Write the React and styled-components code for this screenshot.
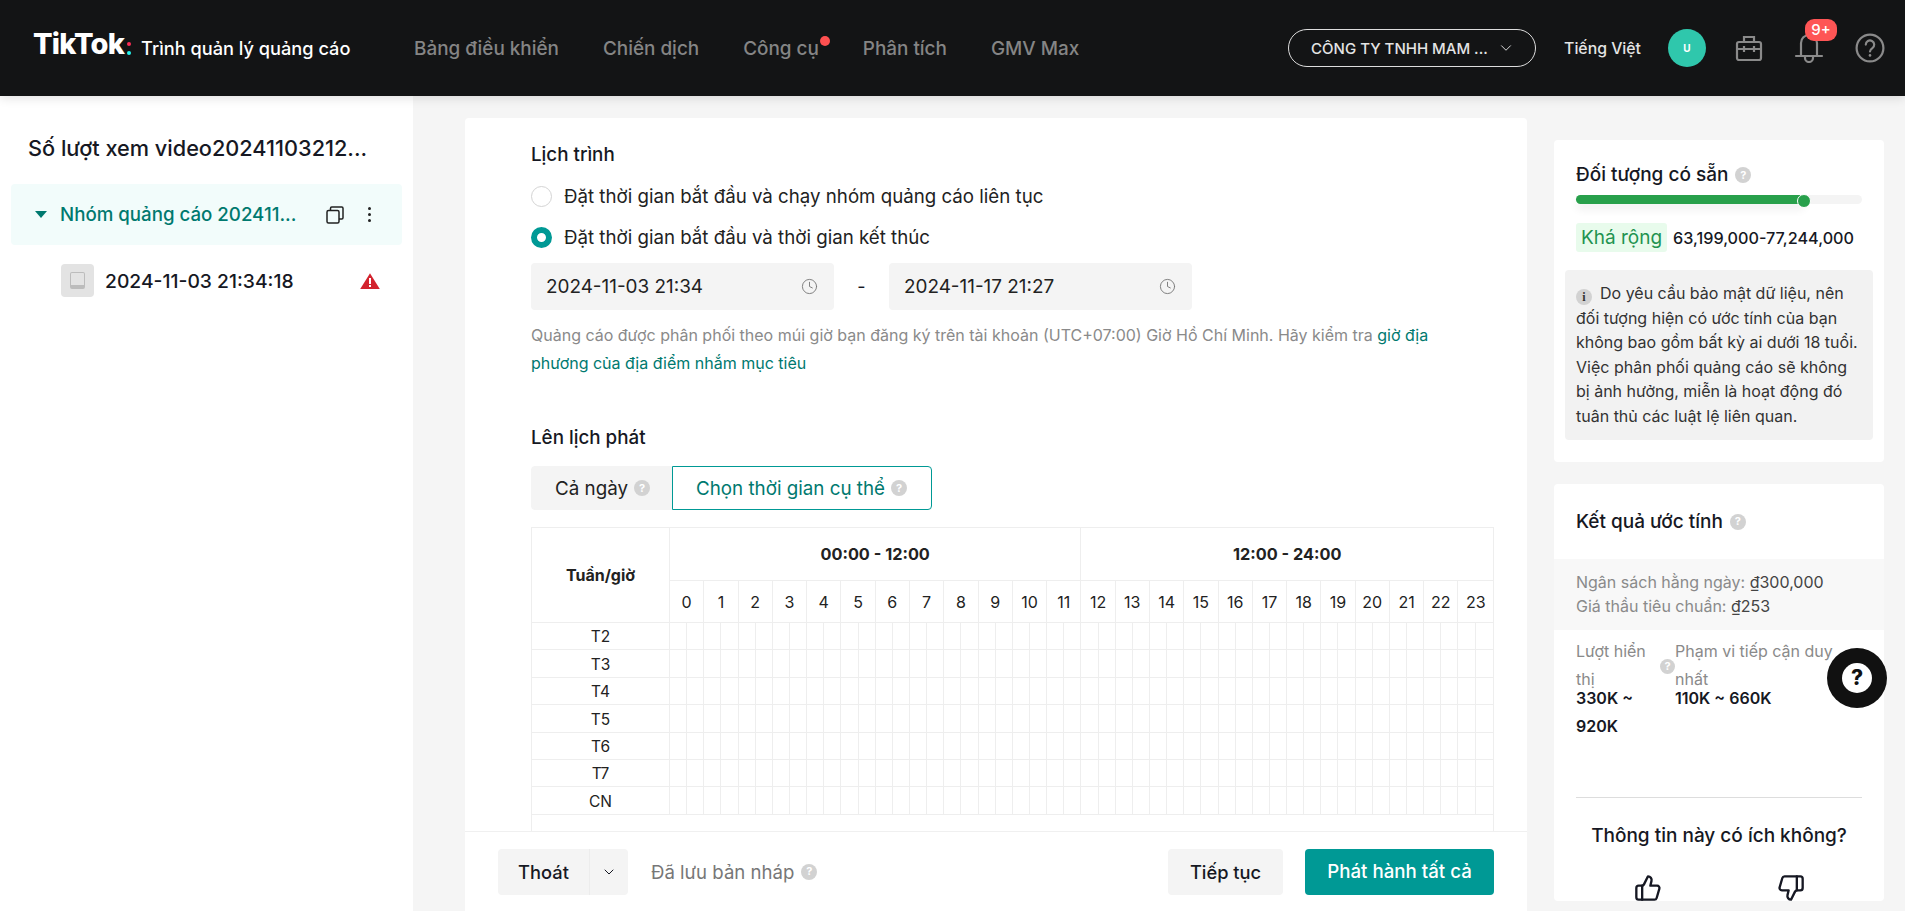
import React from "react";
import styled, { createGlobalStyle } from "styled-components";
import { ChevronDown, Clock, ThumbsUp, ThumbsDown } from "lucide-react";

const GlobalStyle = createGlobalStyle`
  html, body { margin: 0; padding: 0; background: #f5f5f5; }
  body { font-family: Inter, "Noto Sans", sans-serif; color: #161823; overflow: hidden; }
  * { box-sizing: border-box; }
`;

const NAV_ITEMS = ["Bảng điều khiển", "Chiến dịch", "Công cụ", "Phân tích", "GMV Max"];
const DAYS = ["T2", "T3", "T4", "T5", "T6", "T7", "CN"];
const HOURS = Array.from({ length: 24 }, (_, i) => i);
const HALF_HOURS = Array.from({ length: 48 }, (_, i) => i);

const Help = ({ size }) => <HelpDot $size={size}>?</HelpDot>;

const BriefcaseIcon = () => (
  <svg width="28" height="28" viewBox="0 0 28 28" fill="none" stroke="#8a8a8a" strokeWidth="2.2">
    <rect x="2" y="8" width="24" height="18" rx="2" />
    <path d="M9 8V3h10v5M2 15h24M9 12v6M19 12v6" />
  </svg>
);

const BellIcon = () => (
  <svg width="30" height="30" viewBox="0 0 30 30" fill="none" stroke="#8a8a8a" strokeWidth="2.2">
    <path d="M7 22V10a8 8 0 0 1 16 0v12" />
    <path d="M2 23h26" strokeLinecap="round" />
    <path d="M11 23v2a4 4 0 0 0 8 0v-2" />
  </svg>
);

const HelpCircleIcon = () => (
  <svg width="30" height="30" viewBox="0 0 30 30" fill="none" stroke="#8a8a8a" strokeWidth="2.2">
    <circle cx="15" cy="15" r="13.4" />
    <path d="M10.8 11.6a4.2 4.2 0 1 1 6.6 3.5c-1.5 1-2.4 1.8-2.4 3.4" strokeLinecap="round" />
    <circle cx="15" cy="22.4" r="1.3" fill="#8a8a8a" stroke="none" />
  </svg>
);

const CopyIcon = () => (
  <svg width="18" height="18" viewBox="0 0 18 18" fill="none" stroke="#222" strokeWidth="1.5">
    <rect x="1" y="4.5" width="12" height="12.5" rx="1.5" />
    <path d="M4.5 4.5V2.2A1.2 1.2 0 0 1 5.7 1h10.1A1.2 1.2 0 0 1 17 2.2v9.6a1.2 1.2 0 0 1-1.2 1.2H13" />
  </svg>
);

const WarningIcon = () => (
  <svg width="20" height="16" viewBox="0 0 20 16">
    <path d="M10 0.3 19.8 16H0.2z" fill="#d3232e" />
    <rect x="9" y="5" width="2" height="6" fill="#fff" />
    <rect x="9" y="12" width="2" height="2" fill="#fff" />
  </svg>
);

export default function App() {
  return (
    <>
      <GlobalStyle />
      <Page>
        <Header>
          <Logo>
            <LogoMark>TikTok</LogoMark>
            <LogoColon>
              <LogoDot $color="#fe2c55" />
              <LogoDot $color="#25f4ee" />
            </LogoColon>
            <LogoText>Trình quản lý quảng cáo</LogoText>
          </Logo>
          <Nav>
            {NAV_ITEMS.map((item) => (
              <NavItem key={item} $dot={item === "Công cụ"}>
                {item}
              </NavItem>
            ))}
          </Nav>
          <HeaderRight>
            <AccountPill>
              <AccountName>CÔNG TY TNHH MAM ...</AccountName>
              <ChevronDown size={18} strokeWidth={1.3} color="#ddd" />
            </AccountPill>
            <Language>Tiếng Việt</Language>
            <Avatar>U</Avatar>
            <HeaderIcon>
              <BriefcaseIcon />
            </HeaderIcon>
            <HeaderIcon>
              <BellIcon />
              <Badge>9+</Badge>
            </HeaderIcon>
            <HeaderIcon>
              <HelpCircleIcon />
            </HeaderIcon>
          </HeaderRight>
        </Header>

        <Body>
          <Sidebar>
            <CampaignTitle>Số lượt xem video20241103212...</CampaignTitle>
            <GroupRow>
              <Caret />
              <GroupName>Nhóm quảng cáo 202411...</GroupName>
              <CopyIcon />
              <Dots>
                <i />
                <i />
                <i />
              </Dots>
            </GroupRow>
            <AdRow>
              <AdThumb>
                <AdThumbInner />
              </AdThumb>
              <AdName>2024-11-03 21:34:18</AdName>
              <WarningIcon />
            </AdRow>
          </Sidebar>

          <Main>
            <ContentCard>
              <Content>
                <SectionLabel>Lịch trình</SectionLabel>
                <RadioList>
                  <RadioRow>
                    <Radio />
                    Đặt thời gian bắt đầu và chạy nhóm quảng cáo liên tục
                  </RadioRow>
                  <RadioRow>
                    <Radio $checked />
                    Đặt thời gian bắt đầu và thời gian kết thúc
                  </RadioRow>
                </RadioList>
                <DateRow>
                  <DateInput>
                    2024-11-03 21:34
                    <Clock size={17} strokeWidth={1.3} color="#777" />
                  </DateInput>
                  <DateDash>-</DateDash>
                  <DateInput>
                    2024-11-17 21:27
                    <Clock size={17} strokeWidth={1.3} color="#777" />
                  </DateInput>
                </DateRow>
                <Hint>
                  Quảng cáo được phân phối theo múi giờ bạn đăng ký trên tài khoản (UTC+07:00) Giờ Hồ
                  Chí Minh. Hãy kiểm tra <HintLink>giờ địa phương của địa điểm nhắm mục tiêu</HintLink>
                </Hint>
                <ScheduleLabel>Lên lịch phát</ScheduleLabel>
                <Tabs>
                  <Tab>
                    Cả ngày <Help />
                  </Tab>
                  <Tab $active>
                    Chọn thời gian cụ thể <Help />
                  </Tab>
                </Tabs>
                <ScheduleFrame>
                  <ScheduleTable>
                    <colgroup>
                      <col width="138" />
                      {HALF_HOURS.map((h) => (
                        <col key={h} />
                      ))}
                    </colgroup>
                    <thead>
                      <tr>
                        <CornerCell rowSpan={2}>Tuần/giờ</CornerCell>
                        <RangeCell colSpan={24}>00:00 - 12:00</RangeCell>
                        <RangeCell colSpan={24}>12:00 - 24:00</RangeCell>
                      </tr>
                      <tr>
                        {HOURS.map((h) => (
                          <HourCell key={h} colSpan={2}>
                            {h}
                          </HourCell>
                        ))}
                      </tr>
                    </thead>
                    <tbody>
                      {DAYS.map((day) => (
                        <tr key={day}>
                          <DayCell>{day}</DayCell>
                          {HALF_HOURS.map((h) => (
                            <SlotCell key={h} />
                          ))}
                        </tr>
                      ))}
                    </tbody>
                  </ScheduleTable>
                </ScheduleFrame>
              </Content>
              <Footer>
                <ExitButton>
                  <ExitLabel>Thoát</ExitLabel>
                  <ExitCaret>
                    <ChevronDown size={16} strokeWidth={1.5} />
                  </ExitCaret>
                </ExitButton>
                <DraftNote>
                  Đã lưu bản nháp <Help />
                </DraftNote>
                <FooterSpacer />
                <GreyButton>Tiếp tục</GreyButton>
                <PrimaryButton>Phát hành tất cả</PrimaryButton>
              </Footer>
            </ContentCard>

            <Aside>
              <AudienceCard>
                <AudienceTitle>
                  Đối tượng có sẵn <Help />
                </AudienceTitle>
                <Meter>
                  <MeterFill />
                </Meter>
                <AudienceRange>
                  <RangeTag>Khá rộng</RangeTag>
                  <RangeValue>63,199,000-77,244,000</RangeValue>
                </AudienceRange>
                <NoteBox>
                  <InfoDot>i</InfoDot>
                  Do yêu cầu bảo mật dữ liệu, nên đối tượng hiện có ước tính của bạn không bao gồm bất
                  kỳ ai dưới 18 tuổi. Việc phân phối quảng cáo sẽ không bị ảnh hưởng, miễn là hoạt động
                  đó tuân thủ các luật lệ liên quan.
                </NoteBox>
              </AudienceCard>

              <EstimateCard>
                <EstimateTitle>
                  Kết quả ước tính <Help />
                </EstimateTitle>
                <BudgetBand>
                  <div>
                    Ngân sách hằng ngày: <BudgetValue>₫300,000</BudgetValue>
                  </div>
                  <div>
                    Giá thầu tiêu chuẩn: <BudgetValue>₫253</BudgetValue>
                  </div>
                </BudgetBand>
                <Stats>
                  <StatLeft>
                    <StatLabel>Lượt hiển thị</StatLabel>
                    <StatValue>330K ~ 920K</StatValue>
                  </StatLeft>
                  <StatHelp>
                    <Help size={15} />
                  </StatHelp>
                  <StatRight>
                    <StatLabel>Phạm vi tiếp cận duy nhất</StatLabel>
                    <StatValue>110K ~ 660K</StatValue>
                  </StatRight>
                </Stats>
                <Feedback>
                  <FeedbackTitle>Thông tin này có ích không?</FeedbackTitle>
                  <Thumbs>
                    <ThumbsUp size={28} strokeWidth={2} />
                    <ThumbsDown size={28} strokeWidth={2} />
                  </Thumbs>
                </Feedback>
              </EstimateCard>
            </Aside>
          </Main>
        </Body>
        <FloatingHelp>
          <FloatingInner>?</FloatingInner>
        </FloatingHelp>
      </Page>
    </>
  );
}

const Page = styled.div`
  width: 1905px;
  height: 911px;
  display: flex;
  flex-direction: column;
  overflow: hidden;
  position: relative;
`;
const Header = styled.header`
  height: 96px;
  flex: none;
  display: flex;
  align-items: center;
  background-color: #131415;
  padding: 0 20px 0 33px;
  box-shadow: 0 2px 10px rgba(0, 0, 0, 0.12);
  position: relative;
  z-index: 2;
`;
const Logo = styled.div`
  width: 381px;
  flex: none;
  display: flex;
  align-items: center;
`;
const LogoMark = styled.span`
  color: #fff;
  font-size: 29px;
  font-weight: 800;
  letter-spacing: -0.8px;
  line-height: 30px;
  margin-top: -8px;
`;
const LogoColon = styled.span`
  display: flex;
  flex-direction: column;
  gap: 5px;
  margin: 0 10px 0 3px;
`;
const LogoDot = styled.i`
  width: 4px;
  height: 4px;
  border-radius: 50%;
  background-color: ${(p) => p.$color};
`;
const LogoText = styled.span`
  color: #fff;
  font-size: 18.2px;
  font-weight: 500;
  white-space: nowrap;
`;
const Nav = styled.nav`
  display: flex;
  gap: 44px;
`;
const NavItem = styled.span`
  color: #858585;
  font-size: 18.9px;
  font-weight: 500;
  position: relative;
  &::after {
    content: "";
    display: ${(p) => (p.$dot ? "block" : "none")};
    position: absolute;
    right: -11px;
    top: -1px;
    width: 10px;
    height: 10px;
    border-radius: 50%;
    background-color: #fe5050;
  }
`;
const HeaderRight = styled.div`
  margin-left: auto;
  display: flex;
  align-items: center;
`;
const AccountPill = styled.div`
  width: 248px;
  height: 38px;
  display: flex;
  align-items: center;
  justify-content: space-between;
  padding: 0 20px 0 22px;
  border: 1px solid #ddd;
  border-radius: 19px;
`;
const AccountName = styled.span`
  color: #e4e4e4;
  font-size: 15px;
  font-weight: 500;
  white-space: nowrap;
`;
const Language = styled.span`
  color: #e4e4e4;
  font-size: 15.8px;
  font-weight: 500;
  margin: 0 27px 0 28px;
`;
const Avatar = styled.div`
  width: 38px;
  height: 38px;
  border-radius: 50%;
  background-color: #2fc7ac;
  color: #fff;
  font-size: 10px;
  font-weight: 700;
  display: flex;
  align-items: center;
  justify-content: center;
  margin-right: 29px;
`;
const HeaderIcon = styled.div`
  position: relative;
  display: flex;
  margin-right: 31px;
  &:last-child {
    margin-right: 0;
  }
`;
const Badge = styled.span`
  position: absolute;
  left: 11px;
  top: -14px;
  min-width: 32px;
  height: 22px;
  border-radius: 9px;
  background-color: #fe5555;
  color: #fff;
  font-size: 15px;
  font-weight: 500;
  line-height: 22px;
  text-align: center;
`;
const Body = styled.div`
  flex: 1;
  min-height: 0;
  display: flex;
`;
const Sidebar = styled.aside`
  width: 413px;
  flex: none;
  background-color: #fff;
  padding: 36px 11px 0 11px;
`;
const CampaignTitle = styled.div`
  font-size: 21.7px;
  font-weight: 500;
  line-height: 32px;
  padding-left: 17px;
  white-space: nowrap;
  color: #161823;
`;
const GroupRow = styled.div`
  height: 61px;
  margin-top: 20px;
  display: flex;
  align-items: center;
  background-color: #f2fcfb;
  border-radius: 4px;
  padding-left: 24px;
  position: relative;
`;
const Caret = styled.i`
  width: 0;
  height: 0;
  border-left: 6.5px solid transparent;
  border-right: 6.5px solid transparent;
  border-top: 7px solid #00796f;
  margin-right: 13px;
`;
const GroupName = styled.span`
  width: 266px;
  color: #00796f;
  font-size: 18.7px;
  font-weight: 500;
  white-space: nowrap;
`;
const Dots = styled.span`
  display: flex;
  flex-direction: column;
  gap: 3px;
  margin-left: 24px;
  & > i {
    width: 3px;
    height: 3px;
    border-radius: 50%;
    background-color: #222;
  }
`;
const AdRow = styled.div`
  height: 33px;
  margin-top: 19px;
  display: flex;
  align-items: center;
  padding-left: 50px;
`;
const AdThumb = styled.div`
  width: 33px;
  height: 33px;
  border-radius: 4px;
  background-color: #e3e3e3;
  display: flex;
  align-items: center;
  justify-content: center;
`;
const AdThumbInner = styled.i`
  width: 15px;
  height: 17px;
  border: 1px solid #bcbcbc;
  border-radius: 2px;
  border-bottom-width: 4px;
`;
const AdName = styled.span`
  width: 255px;
  margin-left: 11px;
  font-size: 19.3px;
  font-weight: 500;
  white-space: nowrap;
`;
const Main = styled.main`
  flex: 1;
  min-width: 0;
  display: flex;
  padding: 22px 21px 0 52px;
  gap: 27px;
`;
const ContentCard = styled.section`
  width: 1062px;
  flex: none;
  display: flex;
  flex-direction: column;
  background-color: #fff;
  border-radius: 4px 4px 0 0;
  overflow: hidden;
`;
const Content = styled.div`
  flex: 1;
  min-height: 0;
  display: flex;
  flex-direction: column;
  padding: 25px 33px 0 66px;
`;
const SectionLabel = styled.div`
  font-size: 18.8px;
  font-weight: 500;
  line-height: 24px;
`;
const RadioList = styled.div`
  margin-top: 17px;
  display: flex;
  flex-direction: column;
  gap: 17px;
`;
const RadioRow = styled.label`
  height: 24px;
  display: flex;
  align-items: center;
  gap: 12px;
  font-size: 18.7px;
  color: #222;
`;
const Radio = styled.i`
  width: 21px;
  height: 21px;
  flex: none;
  border-radius: 50%;
  background-color: #fff;
  border: ${(p) => (p.$checked ? "6.5px solid #009995" : "1px solid #d4d4d4")};
`;
const DateRow = styled.div`
  margin-top: 14px;
  display: flex;
  align-items: center;
`;
const DateInput = styled.div`
  width: 303px;
  height: 47px;
  display: flex;
  align-items: center;
  justify-content: space-between;
  padding: 0 16px 0 15px;
  background-color: #f4f4f4;
  border-radius: 4px;
  font-size: 18.9px;
  color: #222;
`;
const DateDash = styled.span`
  width: 55px;
  text-align: center;
  font-size: 18px;
`;
const Hint = styled.p`
  margin: 11px 0 0;
  max-width: 925px;
  font-size: 16px;
  line-height: 28px;
  color: #8a8a8a;
`;
const HintLink = styled.span`
  color: #00796f;
`;
const ScheduleLabel = styled(SectionLabel)`
  margin-top: 49px;
`;
const Tabs = styled.div`
  margin-top: 16px;
  display: flex;
  height: 44px;
`;
const Tab = styled.div`
  display: flex;
  align-items: center;
  gap: 6px;
  height: 44px;
  padding: ${(p) => (p.$active ? "0 24px 0 23px" : "0 21px 0 23px")};
  font-size: 18.8px;
  color: ${(p) => (p.$active ? "#00796f" : "#222")};
  background-color: ${(p) => (p.$active ? "#fff" : "#f4f4f4")};
  border: 1px solid ${(p) => (p.$active ? "#009995" : "#f4f4f4")};
  border-radius: ${(p) => (p.$active ? "0 4px 4px 0" : "4px 0 0 4px")};
`;
const HelpDot = styled.span`
  display: inline-flex;
  align-items: center;
  justify-content: center;
  width: ${(p) => p.$size || 16}px;
  height: ${(p) => p.$size || 16}px;
  flex: none;
  border-radius: 50%;
  background-color: #d2d2d2;
  color: #fff;
  font-size: 11px;
  font-weight: 700;
  line-height: 1;
`;
const ScheduleFrame = styled.div`
  margin-top: 17px;
  flex: 1;
  min-height: 0;
  border: 1px solid #eee;
  border-bottom: none;
  width: 963px;
`;
const ScheduleTable = styled.table`
  width: 100%;
  table-layout: fixed;
  border-collapse: separate;
  border-spacing: 0;
  color: #222;
  font-size: 16px;
  & td,
  & th {
    border-right: 1px solid #eee;
    border-bottom: 1px solid #eee;
    padding: 0;
    text-align: center;
  }
  & tr > *:last-child {
    border-right: none;
  }
`;
const CornerCell = styled.th`
  font-size: 16px;
  font-weight: 700;
`;
const RangeCell = styled.th`
  height: 53px;
  font-size: 16.3px;
  font-weight: 700;
`;
const HourCell = styled.td`
  height: 42px;
  font-size: 16px;
`;
const DayCell = styled.td`
  height: 27.4px;
  font-size: 15.5px;
  line-height: 24px;
  vertical-align: bottom;
`;
const SlotCell = styled.td`
  height: 27.4px;
`;
const Footer = styled.footer`
  height: 80px;
  flex: none;
  display: flex;
  align-items: center;
  border-top: 1px solid #f0f0f0;
  padding: 0 33px 0 33px;
`;
const ExitButton = styled.div`
  width: 130px;
  height: 46px;
  display: flex;
  background-color: #f4f4f4;
  border-radius: 4px;
`;
const ExitLabel = styled.span`
  flex: 1;
  display: flex;
  align-items: center;
  justify-content: center;
  font-size: 18.3px;
  font-weight: 500;
  border-right: 1px solid #ececec;
`;
const ExitCaret = styled.span`
  width: 38px;
  display: flex;
  align-items: center;
  justify-content: center;
`;
const DraftNote = styled.div`
  margin-left: 23px;
  display: flex;
  align-items: center;
  gap: 7px;
  font-size: 18.6px;
  color: #777;
`;
const FooterSpacer = styled.div`
  flex: 1;
`;
const GreyButton = styled.div`
  width: 115px;
  height: 46px;
  display: flex;
  align-items: center;
  justify-content: center;
  background-color: #f4f4f4;
  border-radius: 4px;
  font-size: 18.3px;
  font-weight: 500;
`;
const PrimaryButton = styled(GreyButton)`
  width: 189px;
  margin-left: 22px;
  background-color: #009995;
  color: #fff;
  font-size: 18.7px;
`;
const Aside = styled.aside`
  width: 330px;
  flex: none;
  display: flex;
  flex-direction: column;
  gap: 22px;
  padding: 22px 0 10px;
`;
const AudienceCard = styled.section`
  height: 322px;
  flex: none;
  background-color: #fff;
  border-radius: 4px;
  padding: 22px 11px 0;
`;
const AudienceTitle = styled.div`
  display: flex;
  align-items: center;
  gap: 7px;
  padding-left: 11px;
  font-size: 19px;
  font-weight: 500;
  line-height: 26px;
`;
const Meter = styled.div`
  width: 286px;
  height: 9px;
  margin: 7px 0 0 11px;
  background-color: #f4f4f4;
  border-radius: 5px;
`;
const MeterFill = styled.div`
  width: 80%;
  height: 9px;
  position: relative;
  background-color: #28a04b;
  border-radius: 5px;
  box-shadow: 0 6px 8px rgba(0, 0, 0, 0.06);
  &::after {
    content: "";
    position: absolute;
    right: -6px;
    top: -1.5px;
    width: 12px;
    height: 12px;
    border-radius: 50%;
    background-color: #28a04b;
    border: 1.5px solid #fff;
  }
`;
const AudienceRange = styled.div`
  margin: 19px 0 0 11px;
  display: flex;
  align-items: center;
  gap: 6px;
`;
const RangeTag = styled.span`
  width: 91px;
  height: 29px;
  display: flex;
  align-items: center;
  justify-content: center;
  background-color: #e8fbec;
  border-radius: 3px;
  color: #1f9350;
  font-size: 19px;
`;
const RangeValue = styled.span`
  font-size: 16.2px;
  font-weight: 500;
`;
const NoteBox = styled.div`
  margin-top: 18px;
  height: 170px;
  padding: 11px 8px 0 11px;
  background-color: #f2f2f2;
  border-radius: 4px;
  font-size: 16px;
  line-height: 24.6px;
  color: #333;
`;
const InfoDot = styled.span`
  display: inline-flex;
  align-items: center;
  justify-content: center;
  width: 16px;
  height: 16px;
  margin-right: 8px;
  border-radius: 50%;
  background-color: #d2d2d2;
  font-family: "Liberation Serif", serif;
  font-size: 12px;
  font-weight: 700;
  color: #333;
  vertical-align: -2px;
`;
const EstimateCard = styled.section`
  height: 417px;
  flex: none;
  background-color: #fff;
  border-radius: 4px;
  overflow: hidden;
  position: relative;
`;
const EstimateTitle = styled.div`
  height: 75px;
  display: flex;
  align-items: center;
  gap: 7px;
  padding-left: 22px;
  font-size: 19px;
  font-weight: 500;
`;
const BudgetBand = styled.div`
  height: 71px;
  padding: 11px 22px 0;
  background-color: #f8f8f8;
  font-size: 16px;
  line-height: 24px;
  color: #8a8a8a;
`;
const BudgetValue = styled.span`
  color: #444;
`;
const Stats = styled.div`
  display: flex;
  padding: 7px 22px 0;
  height: 167px;
`;
const StatLeft = styled.div`
  width: 84px;
  flex: none;
`;
const StatHelp = styled.div`
  width: 15px;
  flex: none;
  display: flex;
  flex-direction: column;
  padding-top: 22px;
`;
const StatRight = styled.div`
  flex: 1;
`;
const StatLabel = styled.div`
  font-size: 16px;
  line-height: 28px;
  color: #8a8a8a;
`;
const StatValue = styled.div`
  font-size: 16px;
  font-weight: 600;
  line-height: 28px;
  margin-top: -9px;
  color: #161823;
`;
const Feedback = styled.div`
  margin: 0 22px;
  border-top: 1px solid #ddd;
  text-align: center;
`;
const FeedbackTitle = styled.div`
  margin-top: 24px;
  font-size: 19px;
  font-weight: 500;
  line-height: 28px;
`;
const Thumbs = styled.div`
  margin-top: 24px;
  display: flex;
  justify-content: center;
  gap: 115px;
`;
const FloatingHelp = styled.div`
  position: absolute;
  left: 1827px;
  top: 648px;
  width: 60px;
  height: 60px;
  border-radius: 50%;
  background-color: #111;
  display: flex;
  align-items: center;
  justify-content: center;
  z-index: 3;
`;
const FloatingInner = styled.div`
  width: 30px;
  height: 30px;
  border-radius: 50%;
  background-color: #fff;
  color: #111;
  font-size: 21px;
  font-weight: 800;
  line-height: 30px;
  text-align: center;
`;
